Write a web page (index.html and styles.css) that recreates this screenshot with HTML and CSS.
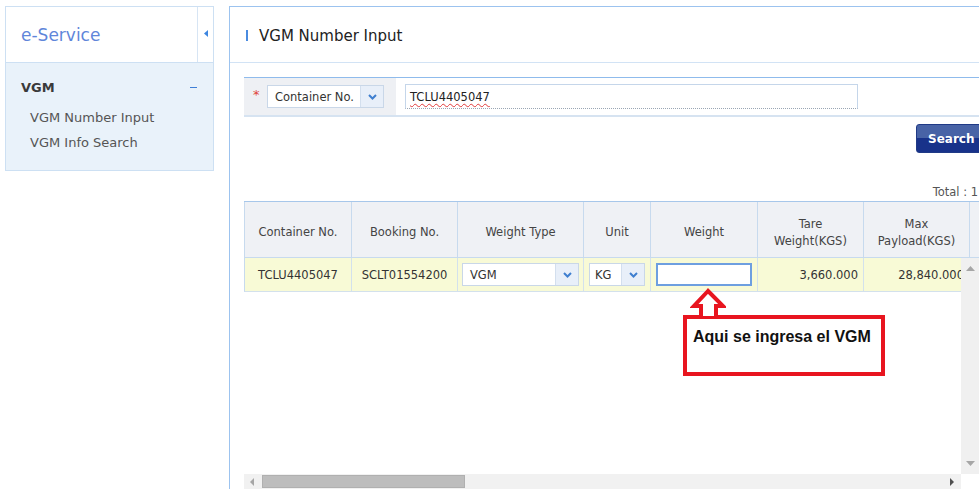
FILE: index.html
```html
<!DOCTYPE html>
<html lang="en">
<head>
<meta charset="utf-8">
<title>VGM Number Input</title>
<link rel="stylesheet" href="styles.css">
</head>
<body>
<div class="page">
  <aside class="side">
    <div class="side-head">
      <div class="brand">e-Service</div>
      <div class="collapse">
        <svg width="4" height="7" viewBox="0 0 4 7"><path d="M4 0V7L0 3.5Z" fill="#3d86e0"/></svg>
      </div>
    </div>
    <nav class="side-menu">
      <div class="menu-group"><span>VGM</span><span class="minus"></span></div>
      <a class="menu-item">VGM Number Input</a>
      <a class="menu-item">VGM Info Search</a>
    </nav>
  </aside>

  <main class="main">
    <div class="main-head"><span class="bar"></span><h1>VGM Number Input</h1></div>
    <div class="content">
      <div class="search-form">
        <div class="label-cell">
          <span class="req">*</span>
          <div class="select sel-key">
            <span class="sel-text">Container No.</span>
            <span class="sel-arrow"><svg width="9" height="6" viewBox="0 0 9 6"><path d="M1 1l3.5 3.5L8 1" fill="none" stroke="#3f7fcf" stroke-width="2"/></svg></span>
          </div>
        </div>
        <div class="field-cell">
          <div class="text-input"><span class="spell">TCLU4405047</span></div>
        </div>
      </div>

      <div class="btn-row"><button class="btn-search">Search</button></div>
      <div class="total">Total : 1</div>

      <div class="grid">
        <div class="row head">
          <div class="cell">Container No.</div>
          <div class="cell">Booking No.</div>
          <div class="cell">Weight Type</div>
          <div class="cell">Unit</div>
          <div class="cell">Weight</div>
          <div class="cell">Tare<br>Weight(KGS)</div>
          <div class="cell">Max<br>Payload(KGS)</div>
          <div class="cell"></div>
        </div>
        <div class="grid-body">
          <div class="body-view">
            <div class="row data">
              <div class="cell">TCLU4405047</div>
              <div class="cell">SCLT01554200</div>
              <div class="cell">
                <div class="select sel-type">
                  <span class="sel-text">VGM</span>
                  <span class="sel-arrow"><svg width="9" height="6" viewBox="0 0 9 6"><path d="M1 1l3.5 3.5L8 1" fill="none" stroke="#3f7fcf" stroke-width="2"/></svg></span>
                </div>
              </div>
              <div class="cell">
                <div class="select sel-unit">
                  <span class="sel-text">KG</span>
                  <span class="sel-arrow"><svg width="9" height="6" viewBox="0 0 9 6"><path d="M1 1l3.5 3.5L8 1" fill="none" stroke="#3f7fcf" stroke-width="2"/></svg></span>
                </div>
              </div>
              <div class="cell"><div class="weight-input"></div></div>
              <div class="cell num">3,660.000</div>
              <div class="cell num">28,840.000</div>
              <div class="cell"></div>
            </div>
          </div>
          <div class="vscroll">
            <svg width="9" height="5" viewBox="0 0 9 5"><path d="M0 5L4.5 0L9 5Z" fill="#a6a6a6"/></svg>
            <svg width="9" height="5" viewBox="0 0 9 5"><path d="M0 0L4.5 5L9 0Z" fill="#a6a6a6"/></svg>
          </div>
        </div>
        <div class="hscroll">
          <svg class="h-left" width="4" height="8" viewBox="0 0 4 8"><path d="M4 0V8L0 4Z" fill="#a6a6a6"/></svg>
          <div class="h-thumb"></div>
          <svg class="h-right" width="4" height="8" viewBox="0 0 4 8"><path d="M0 0V8L4 4Z" fill="#505050"/></svg>
        </div>
      </div>
    </div>
  </main>
</div>

<div class="callout">
  <svg class="callout-arrow" width="36" height="30" viewBox="0 0 36 30">
    <path d="M18 3L4 18H11V30H26V18H33Z" fill="#fff" stroke="#e8151f" stroke-width="4" stroke-linejoin="miter"/>
  </svg>
  <div class="callout-box">Aqui se ingresa el VGM</div>
</div>
</body>
</html>
```

FILE: styles.css
```css
* { box-sizing: border-box; }

html, body {
  margin: 0;
  background: #fff;
  overflow: hidden;
}

body {
  font-family: "DejaVu Sans", Verdana, sans-serif;
  color: #333;
}

.page {
  display: flex;
  align-items: flex-start;
  gap: 15px;
  padding: 6px 0 0 5px;
  height: 489px;
}

/* ---------- sidebar ---------- */
.side {
  flex: none;
  width: 209px;
  border: 1px solid #cde0f3;
}

.side-head {
  display: flex;
  height: 56px;
  border-bottom: 1px solid #cde0f3;
}

.brand {
  flex: 1;
  padding-left: 15px;
  font-size: 17px;
  line-height: 57px;
  color: #5f86da;
}

.collapse {
  width: 16px;
  border-left: 1px solid #d7e5f4;
  display: flex;
  align-items: center;
  justify-content: center;
  padding-bottom: 3px;
}

.side-menu {
  display: flex;
  flex-direction: column;
  height: 107px;
  padding: 14px 15px 0 15px;
  background: #e9f2fa;
}

.menu-group {
  display: flex;
  align-items: center;
  justify-content: space-between;
  height: 20px;
  font-size: 13px;
  font-weight: bold;
  color: #3a3a3a;
  margin-bottom: 8px;
}

.minus {
  width: 7px;
  height: 1px;
  margin-right: 1px;
  background: #3f7fd6;
}

.menu-item {
  padding-left: 9px;
  font-size: 13px;
  line-height: 25px;
  color: #555;
}

/* ---------- main panel ---------- */
.main {
  flex: none;
  width: 760px;
  height: 483px;
  border-left: 1px solid #9cc3ef;
  border-top: 1px solid #9cc3ef;
}

.main-head {
  display: flex;
  align-items: center;
  height: 56px;
  padding: 2px 0 0 16px;
  border-bottom: 1px solid #d2e3f5;
}

.bar {
  width: 2px;
  height: 11px;
  margin-right: 11px;
  background: #4a8be0;
}

.main-head h1 {
  margin: 0;
  font-size: 15px;
  font-weight: normal;
  color: #222;
}

.content {
  padding: 14px 0 0 14px;
}

/* ---------- search form ---------- */
.search-form {
  display: flex;
  height: 40px;
  border-top: 1px solid #8fbbec;
  border-bottom: 2px solid #d6e3f1;
}

.label-cell {
  display: flex;
  align-items: center;
  width: 152px;
  padding-left: 9px;
  background: #eef0f4;
}

.req {
  width: 14px;
  margin-top: -4px;
  font-size: 13px;
  color: #e0453a;
}

.select {
  display: flex;
  align-items: stretch;
  height: 23px;
  background: #fff;
  border: 1px solid #c9d7e8;
  font-size: 11.5px;
  color: #333;
}

.sel-text {
  flex: 1;
  display: flex;
  align-items: center;
  padding-left: 7px;
}

.sel-arrow {
  width: 23px;
  display: flex;
  align-items: center;
  justify-content: center;
  background: #e8eff9;
  border-left: 1px solid #d3dfee;
}

.sel-key { width: 117px; }

.field-cell {
  flex: 1;
  display: flex;
  align-items: center;
  padding-left: 9px;
}

.text-input {
  display: flex;
  align-items: center;
  width: 453px;
  height: 25px;
  padding-left: 4px;
  border: 1px solid #c5d6ea;
  border-bottom: 1px dotted #9aa6b4;
  font-size: 11.5px;
  color: #222;
}

.spell {
  text-decoration: underline wavy #e03a3a;
  text-decoration-thickness: 1px;
  text-underline-offset: 2px;
}

/* ---------- actions ---------- */
.btn-row {
  display: flex;
  justify-content: flex-end;
  margin-top: 7px;
}

.btn-search {
  width: 70px;
  height: 29px;
  margin-right: 3px;
  padding: 0 0 0 11px;
  text-align: left;
  border: 1px solid #203a86;
  border-radius: 3px;
  background: linear-gradient(#4863a6 0, #4863a6 50%, #18328a 50%, #18328a 100%);
  color: #fff;
  font-family: "DejaVu Sans", Verdana, sans-serif;
  font-size: 12px;
  font-weight: bold;
}

.total {
  margin-top: 31px;
  padding-right: 11px;
  text-align: right;
  font-size: 11.5px;
  line-height: 17px;
  color: #555;
}

/* ---------- grid ---------- */
.grid {
  width: 735px;
  border-top: 1px solid #a7c7ea;
}

.row {
  display: grid;
  grid-template-columns: 107px 106px 126px 67px 107px 106px 106px 106px;
  width: 832px;
  border-left: 1px solid #c7daee;
}

.cell {
  display: flex;
  align-items: center;
  justify-content: center;
  text-align: center;
  border-right: 1px solid #c7daee;
  font-size: 11.5px;
  white-space: nowrap;
}

.head {
  height: 56px;
  background: #eff1f5;
  border-bottom: 1px solid #c7daee;
}

.head .cell {
  padding-top: 6px;
  color: #444;
  line-height: 17px;
}

.grid-body {
  display: flex;
  height: 216px;
}

.body-view {
  flex: 1;
  overflow: hidden;
}

.data {
  height: 34px;
  background: #f8fad6;
  border-bottom: 1px solid #d3e1ec;
}

.data .cell {
  color: #333;
  border-right-color: #d3e1ec;
}

.data .cell.num {
  justify-content: flex-end;
  padding-right: 5px;
}

.sel-type { width: 117px; }
.sel-unit { width: 56px; }

.sel-unit .sel-text { padding-left: 5px; }

.weight-input {
  width: 96px;
  height: 23px;
  background: #fff;
  border: 2px solid #6e9fe0;
}

.vscroll {
  flex: none;
  width: 18px;
  display: flex;
  flex-direction: column;
  align-items: center;
  justify-content: space-between;
  padding: 8px 0 8px;
  background: #f0f0f0;
}

.hscroll {
  display: flex;
  align-items: center;
  height: 15px;
  margin-right: 18px;
  background: #f1f1f1;
}

.h-left { margin-left: 6px; }

.h-thumb {
  width: 203px;
  height: 13px;
  margin-left: 8px;
  background: #bdbdbd;
  border: 1px solid #b0b0b0;
}

.h-right { margin-left: auto; margin-right: 7px; }

/* ---------- note over the grid ---------- */
.callout {
  position: absolute;
  left: 683px;
  top: 288px;
}

.callout-arrow {
  display: block;
  margin-left: 7px;
  margin-bottom: -3px;
}

.callout-box {
  width: 202px;
  height: 61px;
  padding: 8px 0 0 6px;
  border: 4px solid #e8151f;
  background: #fff;
  font-family: "Liberation Sans", Arial, sans-serif;
  font-size: 16px;
  font-weight: bold;
  line-height: 19px;
  color: #111;
}
```
